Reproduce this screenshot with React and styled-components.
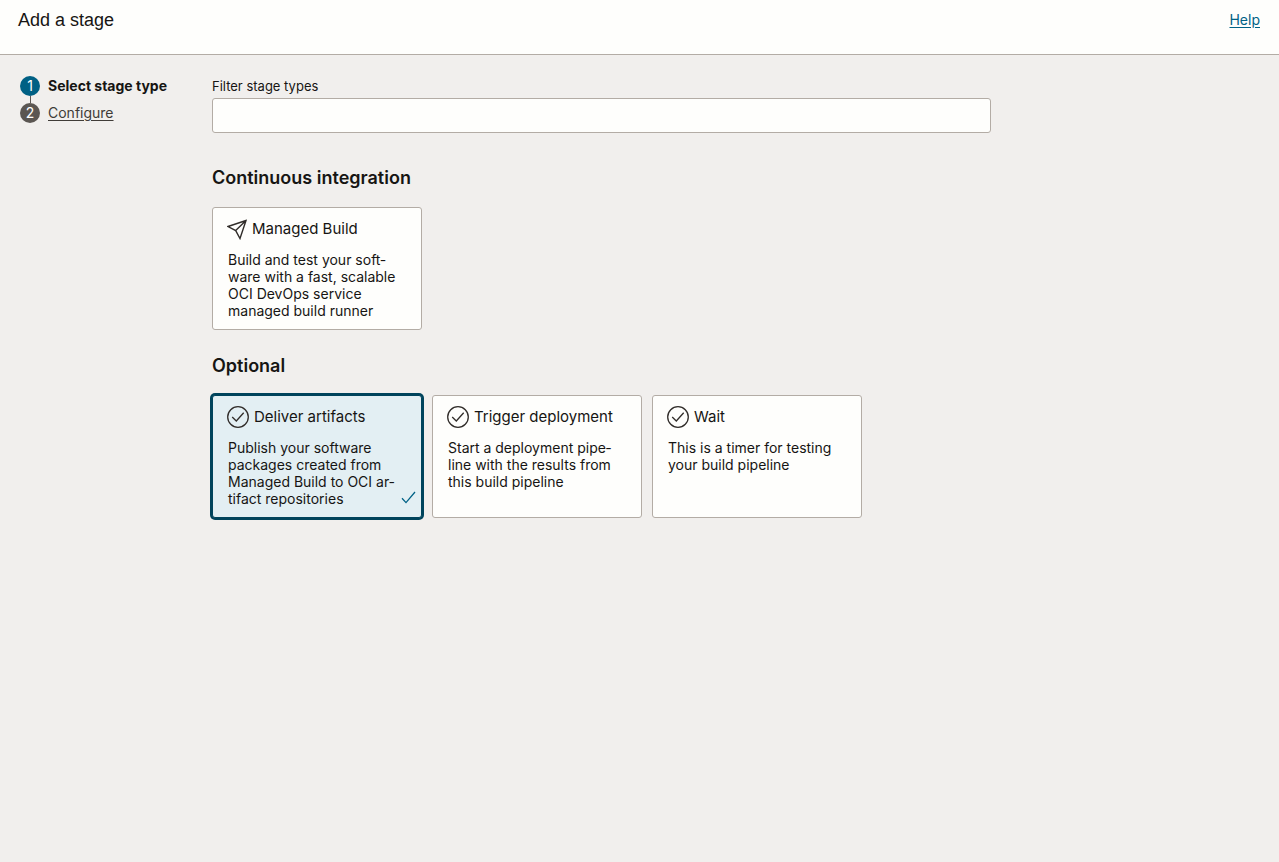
import React, { useState } from "react";
import styled, { createGlobalStyle } from "styled-components";

const GlobalStyle = createGlobalStyle`
  *, *::before, *::after { box-sizing: border-box; }
  body {
    margin: 0;
    background: #f1efed;
    color: #161513;
    font-family: Inter, "Liberation Sans", sans-serif;
    font-size: 14px;
    line-height: 17px;
  }
`;

const Header = styled.header`
  display: flex;
  justify-content: space-between;
  align-items: flex-start;
  height: 55px;
  padding: 8px 19px 0 18px;
  background: #fefefc;
  border-bottom: 1px solid #b3aca5;
`;

const Title = styled.h1`
  margin: 0;
  font-family: "Liberation Sans", Arial, sans-serif;
  font-size: 18px;
  line-height: 24px;
  font-weight: 400;
`;

const HelpLink = styled.a`
  color: #006286;
  line-height: 24px;
  text-underline-offset: 2px;
`;

const Layout = styled.div`
  display: flex;
  padding: 21px 20px;
`;

const Steps = styled.ol`
  flex: 0 0 192px;
  display: flex;
  flex-direction: column;
  margin: 0;
  padding: 0;
  list-style: none;
`;

const Step = styled.li`
  display: flex;
  align-items: center;
  gap: 8px;
  height: 20px;
  line-height: 20px;
  font-weight: ${(p) => (p.$current ? 700 : 400)};
`;

const StepLine = styled.li`
  width: 1px;
  height: 7px;
  margin-left: 10px;
  background: #5b5652;
`;

const StepNumber = styled.span`
  width: 20px;
  height: 20px;
  border-radius: 50%;
  background: ${(p) => (p.$current ? "#006084" : "#5b5652")};
  color: #fff;
  font-weight: 400;
  text-align: center;
`;

const StepLink = styled.a`
  color: #403c38;
  text-underline-offset: 2px;
`;

const Main = styled.main`
  flex: 1;
  min-width: 0;
`;

const FilterLabel = styled.label`
  display: block;
  margin-bottom: 2px;
  font-size: 13px;
  line-height: 20px;
`;

const FilterInput = styled.input`
  display: block;
  width: 100%;
  max-width: 779px;
  height: 35px;
  padding: 0 10px;
  border: 1px solid #b3aca5;
  border-radius: 3px;
  background: #fefefc;
  font: inherit;
`;

const Section = styled.section`
  margin-top: ${(p) => (p.$first ? 33 : 24)}px;
`;

const SectionTitle = styled.h2`
  margin: 0 0 17px;
  font-size: 18px;
  line-height: 24px;
  font-weight: 600;
`;

const Cards = styled.div`
  display: flex;
  flex-wrap: wrap;
  gap: 10px;
`;

const Card = styled.label`
  position: relative;
  width: 210px;
  min-height: 123px;
  padding: 10px 14px;
  border: 1px solid ${(p) => (p.$selected ? "#00445c" : "#b3aca5")};
  border-radius: 3px;
  background: ${(p) => (p.$selected ? "#e3eff3" : "#fefefc")};
  box-shadow: ${(p) => (p.$selected ? "0 0 0 2px #00445c" : "none")};
  cursor: pointer;
`;

const CardRadio = styled.input`
  position: absolute;
  inset: 0;
  margin: 0;
  opacity: 0;
  cursor: pointer;
`;

const CardHeading = styled.div`
  display: flex;
  align-items: center;
  gap: 5px;
  height: 22px;
  margin-bottom: 11px;
  font-size: 15px;
  line-height: 20px;
`;

const CardText = styled.p`
  margin: 0 0 0 1px;
  hyphens: manual;
`;

const SelectedMark = styled.svg`
  position: absolute;
  right: 5px;
  bottom: 12px;
`;

const PlaneIcon = () => (
  <svg width="20" height="22" viewBox="0 0 20 22" fill="none" stroke="#312d2a" strokeWidth="1.4" strokeLinejoin="miter" aria-hidden="true">
    <path d="M19 2.5 L1 8.5 L8.7 12.6 L13 20.5 Z M19 2.5 L8.7 12.6" />
  </svg>
);

const CheckCircleIcon = () => (
  <svg width="22" height="22" viewBox="0 0 22 22" fill="none" stroke="#312d2a" strokeWidth="1.3" aria-hidden="true">
    <circle cx="11" cy="11" r="10.3" />
    <path d="M5.2 11 L9.3 15 L16.7 6.7" />
  </svg>
);

const CI_STAGES = [
  {
    id: "build",
    title: "Managed Build",
    icon: PlaneIcon,
    text: "Build and test your soft\u00ADware with a fast, scalable OCI DevOps service managed build runner",
  },
];

const OPTIONAL_STAGES = [
  {
    id: "deliver",
    title: "Deliver artifacts",
    icon: CheckCircleIcon,
    text: "Publish your software packages created from Managed Build to OCI ar\u00ADtifact repositories",
  },
  {
    id: "trigger",
    title: "Trigger deployment",
    icon: CheckCircleIcon,
    text: "Start a deployment pipe\u00ADline with the results from this build pipeline",
  },
  {
    id: "wait",
    title: "Wait",
    icon: CheckCircleIcon,
    text: "This is a timer for testing your build pipeline",
  },
];

function StageCard({ stage, selected, onSelect }) {
  const Icon = stage.icon;
  return (
    <Card $selected={selected} htmlFor={stage.id}>
      <CardRadio
        type="radio"
        name="stage-type"
        id={stage.id}
        checked={selected}
        onChange={() => onSelect(stage.id)}
      />
      <CardHeading>
        <Icon />
        {stage.title}
      </CardHeading>
      <CardText>{stage.text}</CardText>
      {selected && (
        <SelectedMark width="15" height="15" viewBox="0 0 15 15" fill="none" stroke="#006286" strokeWidth="1.3" aria-hidden="true">
          <path d="M1 8.3 L5 12.6 L14 2" />
        </SelectedMark>
      )}
    </Card>
  );
}

function StageGroup({ title, stages, first, selected, onSelect }) {
  return (
    <Section $first={first}>
      <SectionTitle>{title}</SectionTitle>
      <Cards>
        {stages.map((stage) => (
          <StageCard key={stage.id} stage={stage} selected={selected === stage.id} onSelect={onSelect} />
        ))}
      </Cards>
    </Section>
  );
}

export default function App() {
  const [selected, setSelected] = useState("deliver");
  const [filter, setFilter] = useState("");
  const matches = (stage) => stage.title.toLowerCase().includes(filter.toLowerCase());

  return (
    <>
      <GlobalStyle />
      <Header>
        <Title>Add a stage</Title>
        <HelpLink href="#help">Help</HelpLink>
      </Header>
      <Layout>
        <Steps>
          <Step $current aria-current="step">
            <StepNumber $current>1</StepNumber>
            Select stage type
          </Step>
          <StepLine aria-hidden="true" />
          <Step>
            <StepNumber>2</StepNumber>
            <StepLink href="#configure">Configure</StepLink>
          </Step>
        </Steps>
        <Main>
          <FilterLabel htmlFor="filter">Filter stage types</FilterLabel>
          <FilterInput id="filter" type="text" value={filter} onChange={(e) => setFilter(e.target.value)} />
          <StageGroup title="Continuous integration" stages={CI_STAGES.filter(matches)} first selected={selected} onSelect={setSelected} />
          <StageGroup title="Optional" stages={OPTIONAL_STAGES.filter(matches)} selected={selected} onSelect={setSelected} />
        </Main>
      </Layout>
    </>
  );
}
